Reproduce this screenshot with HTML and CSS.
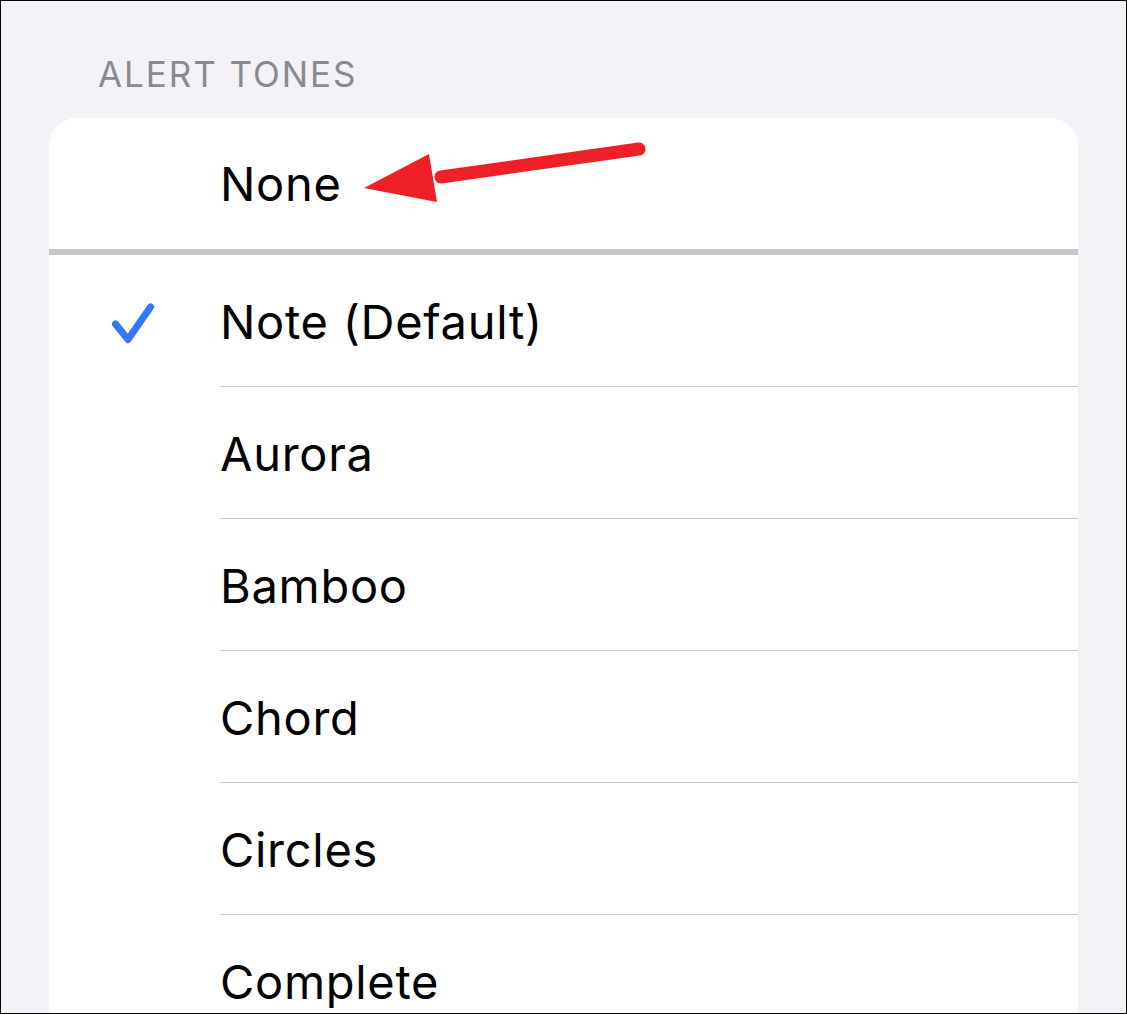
FILE: index.html
```html
<!DOCTYPE html>
<html lang="en">
  <head>
    <meta charset="UTF-8" />
    <meta name="viewport" content="width=device-width, initial-scale=1.0" />
    <title>Alert Tones</title>
    <link rel="stylesheet" href="styles.css">
  </head>
  <body>
    <main class="frame">
      <h2 class="section-title">ALERT TONES</h2>
      <section class="card">
        <!-- None option, with annotation arrow -->
        <div class="row row-none">
          <span class="row-check"></span>
          <div class="row-body">None</div>
          <svg class="arrow" width="300" height="70" viewBox="0 0 300 70">
            <line x1="278" y1="19" x2="80" y2="47" stroke="#ee1f27" stroke-width="13" stroke-linecap="round" />
            <polygon points="3,58 68,24 76,72" fill="#ee1f27" />
          </svg>
        </div>
        <div class="thick-sep"></div>
        <ul class="tone-list" id="tone-list"></ul>
      </section>
    </main>

    <script>
      const tones = [
        { name: "Note (Default)", selected: true },
        { name: "Aurora" },
        { name: "Bamboo" },
        { name: "Chord" },
        { name: "Circles" },
        { name: "Complete" },
      ];
      const checkIcon = `<svg width="46" height="46" viewBox="0 0 46 46">
          <polyline points="7.5,26 20,41.5 42.5,9" fill="none" stroke="#3478f6" stroke-width="7" stroke-linecap="round" stroke-linejoin="round" />
        </svg>`;
      document.getElementById("tone-list").innerHTML = tones
        .map((item) => {
          return `
          <li class="row">
            <span class="row-check">${item.selected ? checkIcon : ""}</span>
            <div class="row-body">${item.name}</div>
          </li>
          `;
        })
        .join("");
    </script>
  </body>
</html>
```

FILE: styles.css
```css
html,
body {
  margin: 0;
  padding: 0;
}
body {
  font-family: Inter, "Liberation Sans", sans-serif;
  background: #f2f2f7;
}
.frame {
  box-sizing: border-box;
  height: 100vh;
  border: 1px solid #000;
  padding: 53px 48px 0;
  overflow: hidden;
  background: #f2f2f7;
}
.section-title {
  margin: 0 0 24px 49px;
  font-size: 35px;
  line-height: 40px;
  font-weight: 400;
  color: #8a8a8e;
  letter-spacing: 0.055em;
}
.card {
  background: #fff;
  border-radius: 28px 28px 0 0;
}
.tone-list {
  list-style: none;
  margin: 0;
  padding: 0;
}
.row {
  position: relative;
  display: flex;
  height: 132px;
}
.row-none {
  height: 131px;
}
.row-check {
  display: flex;
  align-items: center;
  width: 171px;
  padding-left: 59px;
  box-sizing: border-box;
  flex-shrink: 0;
}
.row-body {
  flex: 1;
  display: flex;
  align-items: center;
  padding-top: 2px;
  font-size: 47px;
  letter-spacing: 0.015em;
  color: #000;
  border-bottom: 1px solid #c8c8c8;
}
.row-none .row-body {
  padding-top: 0;
  border-bottom: none;
}
.thick-sep {
  height: 6px;
  background: #c6c6c8;
}
.arrow {
  position: absolute;
  left: 312px;
  top: 12px;
  overflow: visible;
}
```
